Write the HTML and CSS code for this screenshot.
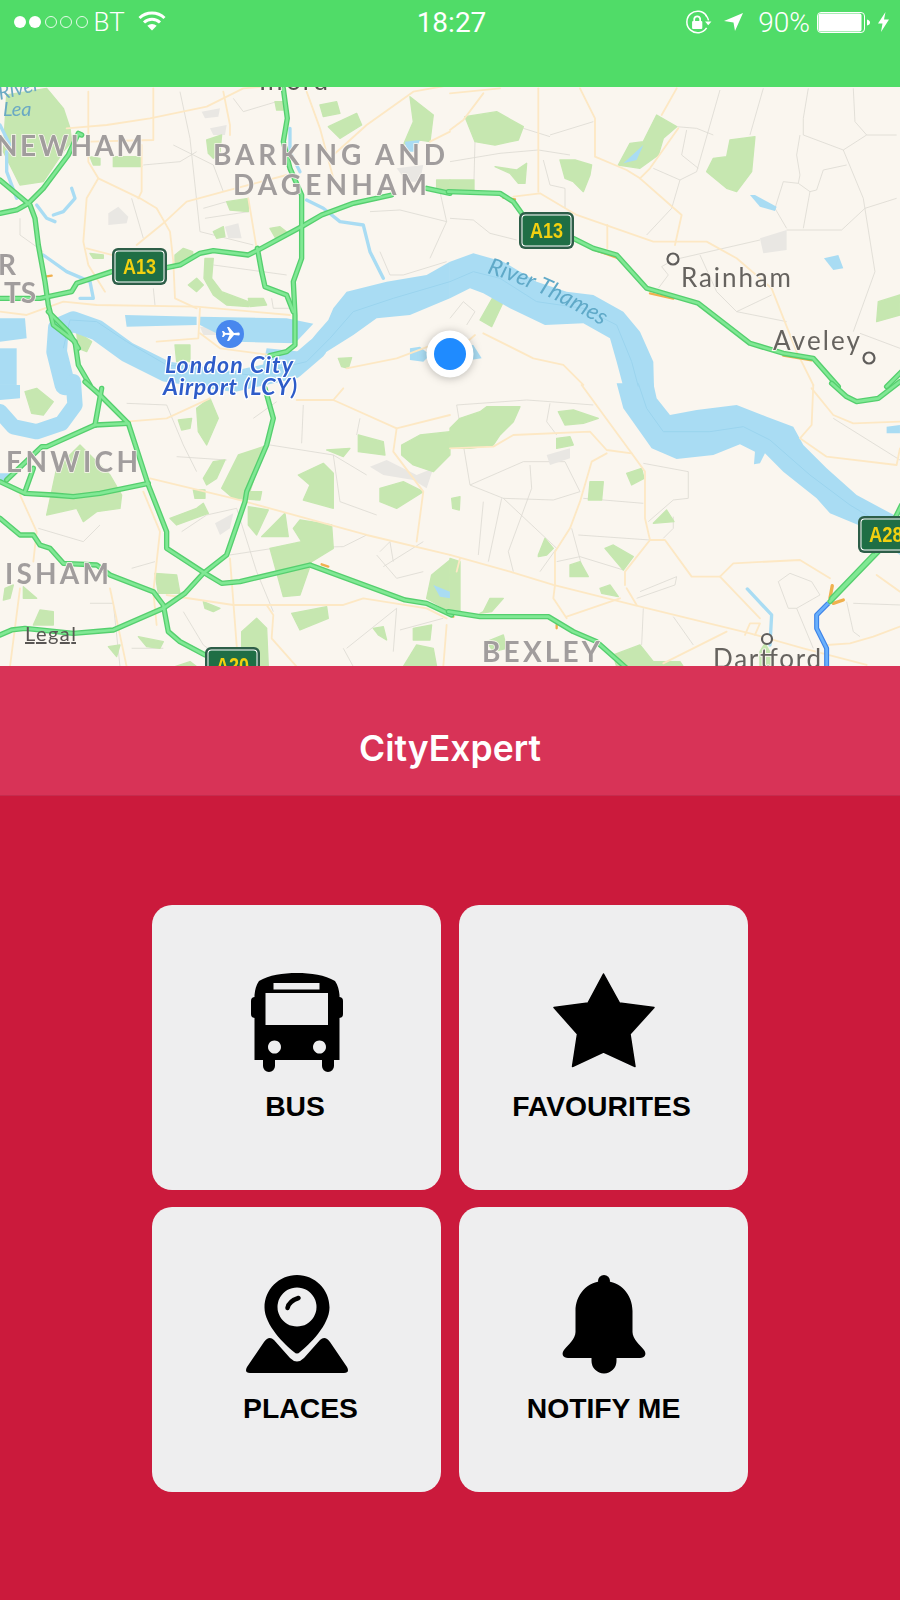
FILE: index.html
```html
<!DOCTYPE html>
<html lang="en">
<head>
<meta charset="utf-8">
<title>CityExpert</title>
<link rel="stylesheet" href="styles.css">
</head>
<body>
<div class="app">
  <header class="top">
    <div class="status">
      <div class="status-left">
        <div class="signal"><i class="dot on"></i><i class="dot on"></i><i class="dot"></i><i class="dot"></i><i class="dot"></i></div>
        <span class="carrier">BT</span>
        <svg class="wifi" viewBox="0 0 28 20" width="28" height="20"><path class="wifi-arc" d="M1.5,7 A18,18 0 0 1 26.5,7"/><path class="wifi-arc" d="M6,11.5 A11.5,11.5 0 0 1 22,11.5"/><path class="wifi-fill" d="M14,19.5 L9.3,14.8 A7,7 0 0 1 18.7,14.8Z"/></svg>
      </div>
      <div class="time">18:27</div>
      <div class="status-right">
        <svg class="rot" viewBox="0 0 26 22" width="28" height="24"><path class="thin" d="M21,5.5 A10,10 0 1 0 21,16.5"/><path class="thin" d="M20,4.5 A10,10 0 0 1 22.8,9.5"/><path class="wifi-fill" d="M19.5,10.5 L25.5,10.5 L22.5,14Z"/><rect class="wifi-fill" x="7.5" y="10" width="9.5" height="7.5" rx="1"/><path class="thin2" d="M9.5,10 V8 A2.8,2.8 0 0 1 15,8 V10"/></svg>
        <svg class="arrow" viewBox="0 0 19 18" width="19" height="18"><polygon class="wifi-fill" points="0,8 19,0 11,18 9.5,9.5"/></svg>
        <span class="pct">90%</span>
        <svg class="batt" viewBox="0 0 53 21" width="53" height="21"><rect class="batt-frame" x=".5" y=".5" width="47" height="20" rx="3.5"/><rect class="wifi-fill" x="1.5" y="1.5" width="43" height="18" rx="2"/><path class="wifi-fill" d="M50,7.5 C52,8 53,9 53,10.5 C53,12 52,13 50,13.5Z"/></svg>
        <svg class="bolt" viewBox="0 0 11 20" width="11" height="20"><polygon class="wifi-fill" points="7.5,0 0,11.5 4.5,11.5 3,20 11,7.5 6,7.5"/></svg>
      </div>
    </div>
  </header>

  <svg class="map" viewBox="0 87 900 579" width="900" height="579">
    <rect class="land" x="0" y="87" width="900" height="579"/>

    <g class="minor">
      <g transform="translate(0,85) scale(.3333)">
        <polyline points="540,20 570,160 600,440 760,480"/><polyline points="700,40 730,80 830,50"/><polyline points="430,240 540,230 590,200"/><polyline points="395,340 430,460"/><polyline points="610,370 680,350"/><polyline points="615,400 745,380"/><polyline points="1110,380 1200,375 1340,410"/><polyline points="1140,500 1170,570 1210,570 1340,530"/><polyline points="1320,320 1340,410 1290,520"/><polyline points="520,180 640,240 670,320"/><polyline points="60,400 60,450 130,500"/><polyline points="460,610 465,660"/><polyline points="640,540 860,570"/><polyline points="815,640 820,670 870,670"/>
      </g>
      <g transform="translate(450,85) scale(.3333)">
        <polyline points="0,230 150,205 265,195 360,210"/><polyline points="75,170 72,285"/><polyline points="300,150 430,110"/><polyline points="220,130 300,155"/><polyline points="280,225 300,300 345,310 345,370"/><polyline points="610,250 690,285 740,260 810,15"/><polyline points="690,285 665,370 590,450"/><polyline points="710,135 695,210 745,250"/><polyline points="680,125 740,130 790,150"/><polyline points="900,150 940,10"/><polyline points="1060,150 1180,195 1250,150 1340,150"/><polyline points="1050,150 1040,210 1050,270 1045,295 1000,290 975,370 1010,430"/><polyline points="1045,295 1080,320 1060,430"/><polyline points="1010,435 1175,435 1245,370 1340,340"/><polyline points="1180,195 1240,340 1275,560 1210,740"/><polyline points="1190,240 1120,255 1100,315 1080,320"/><polyline points="0,400 70,405 120,445 200,465"/><polyline points="690,520 930,465"/><polyline points="670,525 635,545 655,570 625,610"/><polyline points="750,510 800,620 860,680 1010,710"/><polyline points="860,680 965,630"/><polyline points="1230,745 1350,790"/><polyline points="1075,10 1060,100 1060,150"/><polyline points="1210,10 1215,110 1250,150"/><polyline points="0,700 40,650 75,680 50,720"/>
      </g>
      <g transform="translate(0,385) scale(.3333)">
        <polyline points="380,55 500,60 550,180 590,260"/><polyline points="530,215 680,225"/><polyline points="545,440 620,390 710,370 770,560 820,680"/><polyline points="810,180 1000,210 1100,270"/><polyline points="910,60 905,175"/><polyline points="1080,100 1070,150"/><polyline points="760,100 830,50"/><polyline points="115,430 250,470 300,420"/><polyline points="690,510 820,490 1030,485 1100,450"/><polyline points="1140,500 1170,470 1180,530"/><polyline points="1150,545 1270,470"/><polyline points="550,680 610,780 700,845"/><polyline points="270,655 340,655 360,845"/><polyline points="1040,790 1190,670 1180,800"/><polyline points="1030,790 1060,845"/><polyline points="395,790 490,790"/><polyline points="1200,735 1330,700"/><polyline points="395,550 465,530"/><polyline points="1000,210 1020,350 1130,390"/><polyline points="1130,510 1190,580 1270,560"/>
      </g>
      <g transform="translate(450,385) scale(.3333)">
        <polyline points="20,60 230,45 300,50 430,60"/><polyline points="20,60 60,300 160,340 310,345 390,320"/><polyline points="60,300 220,230 345,230 390,320"/><polyline points="240,240 245,310 175,500 190,560"/><polyline points="160,340 320,490 270,560"/><polyline points="385,450 600,465"/><polyline points="365,430 400,560"/><polyline points="320,530 390,515 520,555"/><polyline points="580,235 715,260 715,340 670,345 595,410"/><polyline points="670,395 670,430 640,460"/><polyline points="570,620 680,575 675,600 560,640"/><polyline points="580,670 575,780"/><polyline points="670,695 730,780"/><polyline points="985,590 1020,565 1085,590 1110,630 1040,670 1015,670 985,590"/><polyline points="1040,670 1090,790"/><polyline points="1190,650 1210,740 1230,755"/><polyline points="1210,655 1350,660"/><polyline points="1150,100 1350,225"/><polyline points="100,350 85,510"/><polyline points="155,340 115,530"/><polyline points="400,340 580,355"/><polyline points="300,55 290,110 320,150"/>
      </g>
    </g>

    <g class="grey">
      <g transform="translate(0,85) scale(.3333)">
        <polygon points="325,385 355,365 385,395 380,415 325,420"/><polygon points="675,425 715,415 725,460 685,460"/><polygon points="605,80 660,70 655,95 615,100"/><polygon points="630,130 680,120 675,150 640,150"/><polygon points="600,725 860,730 870,750 610,750"/><polygon points="1190,250 1270,240 1260,290 1220,290"/>
      </g>
      <g transform="translate(450,85) scale(.3333)"><polygon points="930,460 1010,435 1010,495 940,505"/></g>
      <g transform="translate(0,385) scale(.3333)">
        <polygon points="645,415 700,385 690,430 660,450"/><polygon points="1110,245 1160,225 1250,270 1300,250 1280,310 1240,285 1150,270"/>
      </g>
      <g transform="translate(450,385) scale(.3333)"><polygon points="290,210 360,190 360,220 300,240"/></g>
    </g>

    <g class="park">
      <g transform="translate(0,85) scale(.3333)">
        <polygon points="20,30 140,10 190,70 210,130 215,170 190,200 130,290 60,300 10,200"/><polygon points="960,60 1010,50 1020,85 970,95"/><polygon points="985,125 1070,85 1085,120 1020,160"/><polygon points="1230,35 1300,90 1290,170 1260,165 1210,180 1240,110"/><polygon points="825,50 850,50 850,75 830,75"/><polygon points="620,165 665,150 660,200 640,220 625,205"/><polygon points="680,350 745,340 745,380 690,375"/><polygon points="640,440 670,425 675,455 650,460"/><polygon points="810,430 840,425 865,445 830,465"/><polygon points="340,215 420,215 425,245 340,245"/><polygon points="270,215 300,220 300,240 280,240"/><polygon points="525,510 550,490 578,500 580,520 525,540"/><polygon points="615,520 640,520 635,580 665,620 745,650 745,665 680,660 640,630 612,580"/><polygon points="565,600 590,580 610,600 590,620"/><polygon points="745,640 790,640 800,660 750,665"/><polygon points="525,780 570,780 570,830 530,830"/><polygon points="230,740 275,770 260,800 235,790"/><polygon points="1310,285 1350,285 1350,320 1310,310"/><polygon points="270,505 310,510 310,520 280,520"/><polygon points="1015,820 1055,818 1045,850 1025,845"/>
      </g>
      <g transform="translate(450,85) scale(.3333)">
        <polygon points="45,95 140,80 220,125 205,165 135,180 75,170"/><polygon points="505,240 540,175 580,170 620,90 680,125 640,160 625,210 570,250"/><polygon points="770,260 790,220 830,215 840,165 915,155 905,260 860,320 830,310"/><polygon points="135,245 200,255 230,235 225,295 205,295 180,265"/><polygon points="330,225 375,225 425,240 420,270 400,320 370,290 345,280"/><polygon points="0,285 72,285 72,320 0,320"/><polygon points="90,705 130,635 165,640 125,725"/><polygon points="1280,710 1285,650 1350,630 1350,690"/>
      </g>
      <g transform="translate(0,385) scale(.3333)">
        <polygon points="75,20 110,10 160,50 130,90 95,85"/><polygon points="590,70 630,40 655,100 620,180 595,140"/><polygon points="535,105 575,100 570,130 545,135"/><polygon points="980,195 1050,190 1030,215"/><polygon points="1075,150 1150,170 1155,210 1075,200"/><polygon points="1205,180 1260,150 1350,140 1350,210 1300,260 1240,240 1205,210"/><polygon points="1140,310 1210,290 1270,320 1190,370 1140,350"/><polygon points="895,270 970,235 1000,265 1000,370 910,345 930,300"/><polygon points="610,280 640,230 675,225 650,280 620,300"/><polygon points="665,310 715,210 790,185 775,240 750,320 785,320 780,345 700,340"/><polygon points="580,315 615,315 615,340 585,340"/><polygon points="510,400 590,370 610,355 625,385 530,420"/><polygon points="745,365 805,375 770,450 745,420"/><polygon points="785,455 855,385 865,455"/><polygon points="880,430 900,405 995,420 1000,490 935,530 900,630 850,635 810,490 905,470"/><polygon points="140,390 170,250 240,180 330,270 365,330 360,370 290,380 250,410 230,370"/><polygon points="15,610 40,600 30,640 10,645"/><polygon points="70,605 110,640 70,640"/><polygon points="465,565 530,570 540,625 475,625"/><polygon points="610,650 660,670 640,680 615,670"/><polygon points="875,685 980,665 985,700 900,735"/><polygon points="415,755 490,770 480,790 440,785"/><polygon points="325,785 360,780 350,815"/><polygon points="725,740 770,700 800,730 805,845 725,845"/><polygon points="1120,730 1150,725 1160,765 1135,750"/><polygon points="1240,730 1295,720 1290,765 1240,765"/><polygon points="1210,845 1250,780 1300,790 1310,845"/><polygon points="1295,570 1350,525 1350,680 1280,640"/><polygon points="100,720 120,675 160,680 160,720"/><polygon points="525,845 570,830 590,845"/>
      </g>
      <g transform="translate(450,385) scale(.3333)">
        <polygon points="0,130 30,100 90,80 110,65 210,65 190,110 150,150 130,180 60,190 0,190"/><polygon points="325,80 370,75 445,100 400,115 345,120"/><polygon points="320,160 360,155 370,180 320,190"/><polygon points="530,265 575,250 582,280 545,300"/><polygon points="420,290 460,290 455,345 415,345"/><polygon points="5,340 30,335 28,375 8,370"/><polygon points="610,415 650,375 672,410"/><polygon points="265,510 285,460 310,490 290,510 265,515"/><polygon points="465,490 490,480 550,515 520,555"/><polygon points="360,540 390,530 415,575 360,575"/><polygon points="450,610 480,600 505,635 455,625"/><polygon points="100,680 120,640 160,640 125,680 90,685"/><polygon points="0,520 30,530 30,680 0,690"/><polygon points="490,810 570,780 610,830 690,830 700,845 500,845"/><polygon points="110,770 160,750 170,790 130,800"/><polygon points="930,800 945,775 965,810 960,845 930,845"/>
      </g>
    </g>

    <g class="water">
      <g transform="translate(0,85) scale(.3333)">
        <polygon points="1350,530 1280,570 1160,590 1040,620 1000,670 985,705 950,745 905,800 800,790 780,880 980,800 1060,750 1130,700 1230,690 1350,640"/>
        <polygon points="375,690 590,695 590,720 380,725"/><polygon points="600,695 860,700 940,716 885,775 700,770 600,720"/>
        <polygon points="0,700 75,700 80,760 0,770"/><polygon points="0,790 50,790 50,900 0,900"/>
        <polygon points="1230,790 1260,785 1290,810 1270,830 1230,825"/>
        <polyline class="wide" points="950,790 880,850 700,890 500,860 380,800 290,735 220,710 175,730 170,800 195,900"/>
        <polyline class="chan" points="215,310 225,340 190,380 160,390"/><polyline class="chan" points="110,360 140,400 165,410"/><polyline class="chan" points="130,510 200,560 270,590 280,640 240,640"/><polyline class="chan" points="870,130 870,200 900,260"/><polyline class="chan" points="920,345 970,370 1020,410 1090,420 1110,500 1150,580"/><polyline class="chan" points="20,200 20,260 50,340"/><polyline class="chan" points="0,120 30,180"/>
        <polygon points="1215,170 1260,165 1245,200 1220,200"/>
      </g>
      <g transform="translate(450,85) scale(.3333)">
        <polygon points="0,530 70,505 160,530 260,590 350,620 430,630 520,680 570,740 610,830 612,905 520,905 500,830 480,760 400,715 285,720 180,670 100,625 60,610 0,640"/>
        <polygon points="520,235 580,180 560,225"/><polygon points="900,330 915,330 980,365 975,378 930,365"/><polygon points="1122,520 1165,510 1180,550 1150,555"/>
        <polygon points="50,780 70,780 95,820 60,825"/>
      </g>
      <g transform="translate(0,385) scale(.3333)">
        <polyline class="wide2" points="220,-10 225,60 185,115 110,140 40,125 0,80"/>
        <polygon points="0,0 60,0 60,40 0,45"/><polygon points="0,265 30,265 20,290 0,295"/>
        <polygon points="1300,600 1350,620 1350,640 1320,635"/>
      </g>
      <g transform="translate(450,385) scale(.3333)">
        <polygon points="500,-5 520,70 570,140 605,190 680,222 790,210 870,178 915,200 912,238 930,235 945,205 1000,260 1100,340 1140,385 1225,420 1350,510 1350,400 1220,330 1130,250 1060,180 1030,125 950,95 860,60 740,75 660,90 620,40 610,-5"/>
        <polyline class="chan" points="892,612 965,690 960,780"/>
        <polygon points="1310,125 1350,120 1350,145 1310,145"/>
      </g>
    </g>
    <g class="water-line">
      <g transform="translate(450,85) scale(.3333)"><polyline points="0,590 70,560 150,580 260,650 400,670 500,720 545,830 565,905"/></g>
      <g transform="translate(450,385) scale(.3333)"><polyline points="565,-5 590,70 640,140 780,140 880,125 960,165 1080,270 1200,360 1350,450"/></g>
      <g transform="translate(0,85) scale(.3333)"><polyline points="1350,590 1180,640 1060,680 990,760 920,830 750,870 500,840 380,770 290,710 210,705 190,790"/></g>
    </g>

    <g class="yellow">
      <g transform="translate(0,85) scale(.3333)">
        <polyline points="200,130 320,120 450,100 620,65 730,10 850,0"/><polyline points="460,10 460,165 270,170"/><polyline points="265,20 265,230 295,280 420,340 470,370 510,440 520,530 525,640 590,670"/><polyline points="295,280 260,340 250,470 265,540 315,620"/><polyline points="425,180 425,320 415,340"/><polyline points="410,480 490,415 560,350 690,315 860,270"/><polyline points="745,340 770,490"/><polyline points="0,680 80,690 190,650 290,660 590,665 870,690"/><polyline points="600,670 595,760 470,770"/><polyline points="260,490 335,510"/><polyline points="670,20 690,120 690,150"/><polyline points="920,20 960,130 1000,280"/><polyline points="1000,210 1100,120 1240,20 1350,0"/><polyline points="1290,170 1350,140"/><polyline points="1040,850 1190,820 1350,760"/><polyline points="600,745 660,790 810,810"/>
      </g>
      <g transform="translate(450,85) scale(.3333)">
        <polyline points="0,25 150,10"/><polyline points="100,25 40,105 0,135"/><polyline points="265,10 265,320"/><polyline points="390,10 435,100 435,215 530,255 570,280 695,390 675,480"/><polyline points="680,10 635,90"/><polyline points="570,280 600,250 685,130"/><polyline points="190,335 270,325 380,390 610,470 770,470 860,520 965,610 1040,800 1090,900"/><polyline points="472,420 472,490"/><polyline points="100,745 250,820 340,840 400,900"/><polyline points="75,750 40,780"/>
      </g>
      <g transform="translate(0,385) scale(.3333)">
        <polyline points="380,110 500,100 630,40"/><polyline points="890,45 1000,45 1190,130 1350,90"/><polyline points="1190,130 1180,200 1270,320 1250,470"/><polyline points="1000,45 1030,10"/><polyline points="450,280 700,340 1100,450 1350,510"/><polyline points="430,320 480,440 460,620 470,720"/><polyline points="500,630 700,660 800,660 1030,660 1090,640 1280,670 1340,700"/><polyline points="690,520 715,845"/><polyline points="800,660 820,690 815,760 890,845"/><polyline points="60,330 110,440 100,530"/><polyline points="330,610 380,845"/><polyline points="60,610 30,845"/><polyline points="1340,720 1330,845"/>
      </g>
      <g transform="translate(450,385) scale(.3333)">
        <polyline points="0,510 180,560 310,600 550,660 900,745 1060,790 1250,840"/><polyline points="395,0 545,205 585,260 585,400 600,465 525,560 525,600"/><polyline points="0,190 130,185 190,150 420,140 470,195 545,205"/><polyline points="470,205 425,230 390,350 360,430 315,500 315,600 310,640 350,700"/><polyline points="600,465 645,465 725,575 810,575 930,700"/><polyline points="810,575 850,535 1050,525 1140,580"/><polyline points="1090,0 1085,120 1050,160 1130,215 1340,240 1350,190"/><polyline points="1085,10 1150,90 1210,115 1350,110"/><polyline points="350,695 510,640"/><polyline points="640,835 770,770 830,740"/><polyline points="1130,780 1200,775 1270,755 1350,725"/><polyline points="1280,570 1350,620"/><polyline points="530,610 560,660"/><polyline points="20,560 30,520"/><polyline points="885,750 900,715 930,715 915,750"/>
      </g>
    </g>

    <g class="orange">
      <g transform="translate(450,85) scale(.3333)"><polyline points="160,338 195,343"/><polyline points="430,493 500,518"/><polyline points="600,625 670,641"/><polyline points="1000,812 1085,826"/></g>
      <g transform="translate(0,85) scale(.3333)"><polyline points="135,575 155,572"/></g>
      <g transform="translate(0,385) scale(.3333)"><polyline points="965,538 985,545"/></g>
      <g transform="translate(450,385) scale(.3333)"><polyline points="320,720 320,730"/><polyline class="fat" points="1147,602 1140,640"/><polyline class="fat" points="1150,655 1180,645"/><polyline points="0,690 10,695"/></g>
    </g>

    <defs>
      <g id="mw-a">
        <polyline points="850,10 862,100 850,170 870,250 905,330 905,520 880,590 885,690 885,780 860,800 810,812"/><polyline points="0,385 50,375 85,355 130,310 205,210 235,145 245,150"/><polyline points="0,285 90,360 105,400 115,480 135,590 145,660 160,720 225,770 235,840 270,900"/><polyline points="145,680 205,740 235,790"/><polyline points="0,640 120,640 215,620 230,595 335,560"/><polyline points="500,548 540,540 600,505 640,497 745,510 775,495 905,425 965,390 1060,355 1175,330"/><polyline points="1280,310 1350,325"/><polyline points="772,490 785,560 795,605 860,630 880,680"/>
      </g>
      <g id="mw-b">
        <polyline points="-5,320 150,325 190,350 215,385"/><polyline points="370,460 430,490 500,510 590,610 745,655 900,775 1000,805 1090,820 1165,905"/><polyline points="1310,905 1355,860"/>
      </g>
      <g id="mw-c">
        <polyline points="255,-10 300,30 385,115 445,300 500,440 500,490 615,565 665,595 720,590 930,540 1215,645 1280,655 1355,690"/><polyline points="305,10 285,120"/><polyline points="285,120 385,115"/><polyline points="285,120 140,185 125,185 20,285"/><polyline points="0,290 75,325 160,330 220,335 300,325 445,295"/><polyline points="100,250 75,320"/><polyline points="0,400 60,450 100,450 120,480 150,490 190,535 290,540 330,570 460,620 490,660 505,740 540,770 615,810"/><polyline points="795,10 820,100 800,180 740,320 735,350 680,510 610,565 555,625 490,670 340,735 220,745 75,730 35,735 0,750"/>
      </g>
      <g id="mw-d">
        <polyline points="1145,-5 1190,35 1220,50 1285,40 1350,-10"/><polyline points="-5,680 90,695 295,695 370,740 440,770 530,850"/><polyline points="1355,360 1290,490"/><polyline points="1285,500 1140,650"/><polyline points="1270,510 1145,640"/>
      </g>
      <g id="blue-route"><polyline points="1135,655 1100,690 1100,730 1130,790 1130,850"/></g>
    </defs>
    <g transform="translate(0,85) scale(.3333)"><use class="mw-out" href="#mw-a"/><use class="mw-in" href="#mw-a"/></g>
    <g transform="translate(450,85) scale(.3333)"><use class="mw-out" href="#mw-b"/><use class="mw-in" href="#mw-b"/></g>
    <g transform="translate(0,385) scale(.3333)"><use class="mw-out" href="#mw-c"/><use class="mw-in" href="#mw-c"/></g>
    <g transform="translate(450,385) scale(.3333)"><use class="mw-out" href="#mw-d"/><use class="mw-in" href="#mw-d"/><use class="blue-out" href="#blue-route"/><use class="blue-in" href="#blue-route"/></g>

    <g class="sign" transform="translate(112,248)"><rect class="sign-o" width="55" height="37" rx="6"/><rect class="sign-l" x="2.5" y="2.5" width="50" height="32" rx="4"/><rect class="sign-i" x="3.5" y="3.5" width="48" height="30" rx="3"/><text class="sign-t" x="11" y="26" textLength="33" lengthAdjust="spacingAndGlyphs">A13</text></g>
    <g class="sign" transform="translate(519,212)"><rect class="sign-o" width="55" height="37" rx="6"/><rect class="sign-l" x="2.5" y="2.500" width="50" height="32" rx="4"/><rect class="sign-i" x="3.5" y="3.5" width="48" height="30" rx="3"/><text class="sign-t" x="11" y="26" textLength="33" lengthAdjust="spacingAndGlyphs">A13</text></g>
    <g class="sign" transform="translate(205,647)"><rect class="sign-o" width="55" height="37" rx="6"/><rect class="sign-l" x="2.5" y="2.5" width="50" height="32" rx="4"/><rect class="sign-i" x="3.5" y="3.5" width="48" height="30" rx="3"/><text class="sign-t" x="11" y="26" textLength="33" lengthAdjust="spacingAndGlyphs">A20</text></g>
    <g class="sign" transform="translate(858,516)"><rect class="sign-o" width="55" height="37" rx="6"/><rect class="sign-l" x="2.5" y="2.5" width="50" height="32" rx="4"/><rect class="sign-i" x="3.5" y="3.5" width="48" height="30" rx="3"/><text class="sign-t" x="11" y="26" textLength="44" lengthAdjust="spacingAndGlyphs">A282</text></g>

    <circle class="pin-ring" cx="673" cy="259" r="5.5"/>
    <circle class="pin-ring" cx="869" cy="358" r="5.5"/>
    <circle class="pin-ring" cx="767" cy="639" r="5"/>

    <text class="lbl" x="-4" y="156" textLength="147">NEWHAM</text>
    <text class="lbl" x="213" y="165" textLength="232">BARKING AND</text>
    <text class="lbl" x="233" y="195" textLength="194">DAGENHAM</text>
    <text class="lbl" x="-2" y="275">R</text>
    <text class="lbl end" x="36" y="303">TS</text>
    <text class="lbl" x="6" y="472" textLength="132">ENWICH</text>
    <text class="lbl" x="5" y="584" textLength="104">ISHAM</text>
    <text class="lbl" x="482" y="662" textLength="118">BEXLEY</text>
    <text class="town" x="681" y="287" textLength="110">Rainham</text>
    <text class="town" x="773" y="350" textLength="87">Aveley</text>
    <text class="town" x="713" y="668" textLength="108">Dartford</text>
    <text class="town ilford" x="259" y="90" textLength="69">Ilford</text>
    <text class="river" x="3" y="116">Lea</text>
    <text class="river" transform="translate(0,100) rotate(-14)">River</text>
    <path id="thames-path" class="none" d="M487,273 Q545,290 612,332"/>
    <text class="river thames"><textPath href="#thames-path">River Thames</textPath></text>
    <circle class="air" cx="230" cy="334" r="14"/>
    <path class="plane" d="M239,332.5 C240,333 240,335 239,335.500 L234,335 L229,341 L227,341 L229.500,335 L225.500,334.800 L223.500,337 L222,337 L223,334 L222,331 L223.500,331 L225.500,333 L229.500,332.800 L227,327 L229,327 L234,333Z"/>
    <text class="air-t" x="229" y="373" textLength="128">London City</text>
    <text class="air-t" x="230" y="395" textLength="134">Airport (LCY)</text>
    <text class="legal" x="25" y="641" textLength="51">Legal</text>

    <circle class="me-halo" cx="450" cy="354" r="23.500"/>
    <circle class="me" cx="450" cy="354" r="16"/>
  </svg>

  <div class="title-bar"><h1 class="title">CityExpert</h1></div>

  <main class="menu">
    <div class="grid">
      <a class="card">
        <svg class="icon" viewBox="-55 0 110 101" width="110" height="101">
          <path class="ink" fill-rule="evenodd" d="M-38,8 C-28,2 -14,0 0,0 C14,0 28,2 38,8 C41,12 42,17 42.500,22 L42.500,87 L37,87 L37,93 A6,6 0 0 1 25,93 L25,87 L-22,87 L-22,93 A6,6 0 0 1 -34,93 L-34,87 L-42.500,87 L-42.500,22 C-42,17 -41,12 -38,8Z M-23.500,10 L22.500,10 L22.500,16.500 L-23.500,16.500Z M-31.500,20 L31,20 L31,52 L-31.500,52Z M-22.500,67.500 A6.500,6.500 0 1 0 -22.499,67.500Z M22.500,67.500 A6.500,6.500 0 1 0 22.501,67.500Z"/>
          <rect class="ink" x="-46" y="24" width="10" height="21" rx="4"/>
          <rect class="ink" x="36" y="24" width="10" height="21" rx="4"/>
        </svg>
        <span class="label bus">BUS</span>
      </a>
      <a class="card">
        <svg class="icon" viewBox="-55 0 110 101" width="110" height="101">
          <polygon class="ink star" points="-0.500,1 15.500,30 50,34.500 26,61 31,93.500 -0.500,79 -31.500,93.500 -26.500,61 -50,34.500 -16,30"/>
        </svg>
        <span class="label fav">FAVOURITES</span>
      </a>
      <a class="card">
        <svg class="icon" viewBox="-55 0 110 101" width="110" height="101">
          <path class="ink" fill-rule="evenodd" d="M0,0 C18,0 32.500,14.500 32.500,32.500 C32.500,50 12,70 3,77 Q0,80 -3,77 C-12,70 -32.500,50 -32.500,32.500 C-32.500,14.500 -18,0 0,0Z M0,12.500 A19.500,19.500 0 1 0 0.001,12.500Z"/>
          <path class="hl" d="M-9.500,33 Q-8,26 1.500,23"/>
          <path class="ink" d="M-33,67 Q-28,60 -23,65 L-7,83 Q0,90 7,83 L23,65 Q28,60 33,67 L50,92 Q53,98 47,98 L-47,98 Q-53,98 -50,92Z"/>
        </svg>
        <span class="label places">PLACES</span>
      </a>
      <a class="card">
        <svg class="icon" viewBox="-55 0 110 101" width="110" height="101">
          <circle class="ink" cx="0" cy="6" r="6"/>
          <path class="ink" d="M0,6 C17,6 28.500,20 28.500,36 L28.500,57 C28.500,64 36,70 40,75 C43,79 41,83 36,83 L12.500,83 L12.500,86 A12.500,12.500 0 0 1 -12.500,86 L-12.500,83 L-36,83 C-41,83 -43,79 -40,75 C-36,70 -28.500,64 -28.500,57 L-28.500,36 C-28.500,20 -17,6 0,6Z"/>
        </svg>
        <span class="label">NOTIFY ME</span>
      </a>
    </div>
  </main>
</div>
</body>
</html>
```
FILE: styles.css
```css
* { box-sizing: border-box; }
html, body { margin: 0; padding: 0; }
body { width: 900px; height: 1600px; overflow: hidden; font-family: "Liberation Sans", Arial, sans-serif; background: #cb1a3c; }
.app { display: flex; flex-direction: column; width: 900px; height: 1600px; }

/* status bar */
.top { height: 87px; background: #50dc68; flex: none; }
.status { display: grid; grid-template-columns: 1fr auto 1fr; align-items: center; height: 44px; padding: 0 11px 0 14px; color: #fff; font-family: Roboto, sans-serif; font-weight: 300; font-size: 26px; }
.status-left { display: flex; align-items: center; }
.status-right { display: flex; align-items: center; justify-content: flex-end; }
.signal { display: flex; gap: 3.4px; margin-right: 6px; }
.dot { display: block; width: 12px; height: 12px; border-radius: 50%; border: 1px solid rgba(255,255,255,.85); }
.dot.on { background: #fff; }
.carrier { margin-right: 13px; }
.wifi { margin-top: -3px; }
.wifi-arc { fill: none; stroke: #fff; stroke-width: 3; }
.wifi-fill { fill: #fff; }
.thin { fill: none; stroke: #fff; stroke-width: 1.4; }
.thin2 { fill: none; stroke: #fff; stroke-width: 1.6; }
.time { font-weight: 400; font-size: 28px; }
.rot { margin-right: 12px; }
.arrow { margin-right: 15px; }
.pct { margin-right: 7px; font-size: 28px; }
.batt { margin-right: 8px; }
.batt-frame { fill: none; stroke: #fff; stroke-width: 1; }

/* map */
.map { display: block; flex: none; filter: blur(.35px); }
.land { fill: #faf6ef; }
.minor polyline { fill: none; stroke: #dcd9d2; stroke-width: 2.4; stroke-linejoin: round; }
.grey polygon { fill: #e9e7e3; }
.park polygon { fill: #c6e7b0; stroke: #c6e7b0; stroke-width: 4; stroke-linejoin: round; }
.water polygon { fill: #a9dcf3; }
.water .wide, .water .wide2, .water .chan { fill: none; stroke: #a9dcf3; stroke-linejoin: round; stroke-linecap: round; }
.water .wide { stroke-width: 62; }
.water .wide2 { stroke-width: 46; }
.water .chan { stroke-width: 10; }
.water-line polyline { fill: none; stroke: #9bd4ee; stroke-width: 3; stroke-linejoin: round; }
.yellow polyline { fill: none; stroke: #fde8c4; stroke-width: 5.5; stroke-linejoin: round; stroke-linecap: round; }
.orange polyline { fill: none; stroke: #f0b04e; stroke-width: 7; stroke-linecap: round; }
.orange .fat { stroke-width: 10; }
.mw-out { fill: none; stroke: #55cf6e; stroke-width: 16; stroke-linejoin: round; stroke-linecap: round; }
.mw-in { fill: none; stroke: #80e894; stroke-width: 8; stroke-linejoin: round; stroke-linecap: round; }
.blue-out { fill: none; stroke: #3d83e8; stroke-width: 15; stroke-linejoin: round; }
.blue-in { fill: none; stroke: #6ab0fb; stroke-width: 8; stroke-linejoin: round; }
.sign-o { fill: #2d5e48; }
.sign-l { fill: #ffffff; }
.sign-i { fill: #1f6e45; }
.sign-t { fill: #f2d010; font-family: "Liberation Sans", sans-serif; font-weight: 700; font-size: 22px; }
.pin-ring { fill: #faf6ef; stroke: #5f5d5b; stroke-width: 2.2; }
.lbl { fill: #a19d9d; font-family: Lato, sans-serif; font-weight: 700; font-size: 28px; stroke: #faf6ef; stroke-width: 1.5px; paint-order: stroke; }
.lbl.end { text-anchor: end; }
.town { fill: #66635f; font-family: Lato, sans-serif; font-weight: 400; font-size: 26px; stroke: #faf6ef; stroke-width: 2px; paint-order: stroke; }
.ilford { fill: #55524f; }
.river { fill: #6aa9c3; font-family: Lato, sans-serif; font-style: italic; font-size: 20px; }
.thames { fill: #5fa9c8; font-size: 23px; }
.none { fill: none; }
.air { fill: #4887ee; }
.plane { fill: #fff; }
.air-t { fill: #2e5cc9; font-family: Lato, sans-serif; font-style: italic; font-weight: 700; font-size: 23px; text-anchor: middle; stroke: #fff; stroke-width: 2.5px; paint-order: stroke; }
.legal { fill: #595654; font-family: Lato, sans-serif; font-size: 20px; text-decoration: underline; }
.me-halo { fill: #fff; filter: drop-shadow(0 1px 4px rgba(0,0,0,.25)); }
.me { fill: #1f8bff; }

/* title */
.title-bar { flex: none; height: 130px; display: flex; align-items: center; justify-content: center; padding-top: 36px; background: #d83357; border-bottom: 1px solid #c52c4e; }
.title { margin: 0; color: #fff; font-family: Inter, sans-serif; font-weight: 600; font-size: 35.5px; line-height: 44px; }

/* menu */
.menu { flex: 1; padding-top: 109px; }
.grid { display: grid; grid-template-columns: 289px 289px; grid-auto-rows: 284.5px; gap: 17.5px 18px; justify-content: center; }
.card { display: flex; flex-direction: column; align-items: center; padding-top: 68px; background: #eeeeef; border-radius: 20px; }
.icon { display: block; flex: none; }
.ink { fill: #000; }
.star { stroke: #000; stroke-width: 1.5; stroke-linejoin: round; }
.hl { fill: none; stroke: #000; stroke-width: 4.5; stroke-linecap: round; }
.label { margin-top: 16px; color: #000; font-weight: 700; font-size: 28.3px; line-height: 32px; }
.label.bus { margin-right: 3px; }
.label.fav { margin-right: 4px; }
.label.places { margin-left: 8px; }
```
